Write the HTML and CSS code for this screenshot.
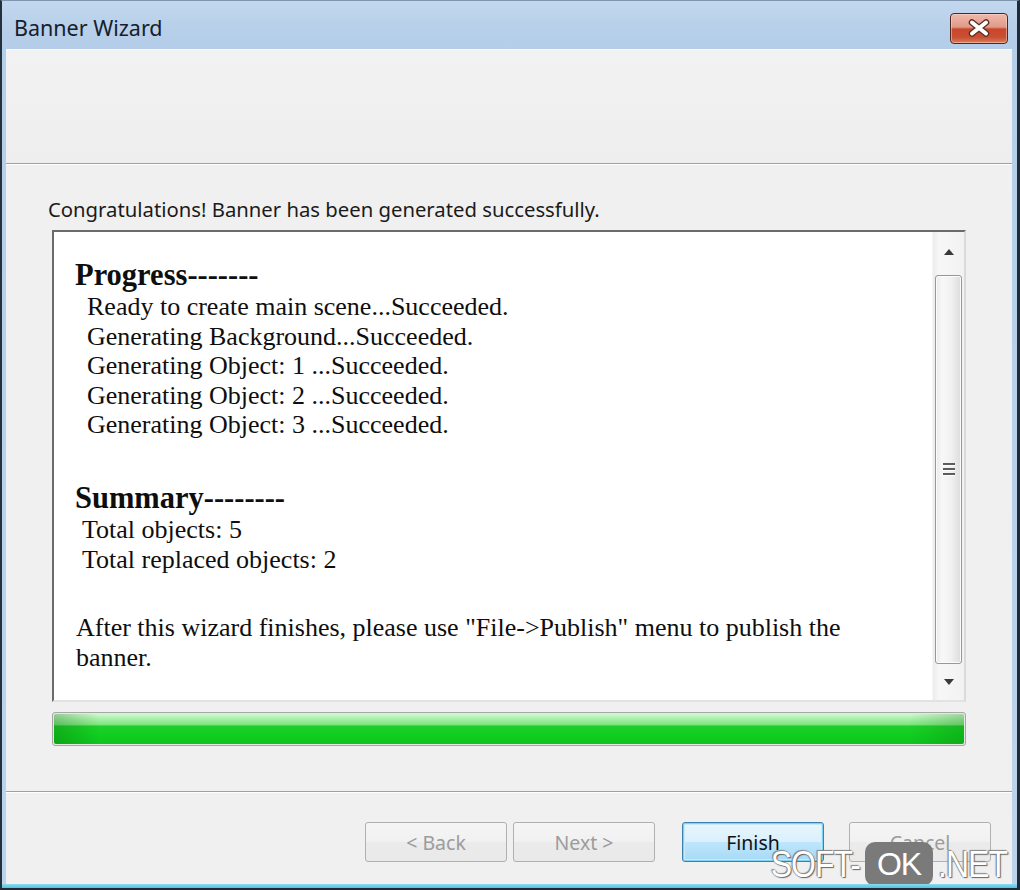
FILE: index.html
```html
<!DOCTYPE html>
<html>
<head>
<meta charset="utf-8">
<title>Banner Wizard</title>
<link rel="stylesheet" href="styles.css">
</head>
<body>
<div class="window">
  <div class="titlebar">
    <span class="title">Banner Wizard</span>
    <div class="close">
      <svg width="26" height="18" viewBox="0 0 26 18">
        <path d="M6 3.5 L20 14.5 M20 3.5 L6 14.5" stroke="#5a2a24" stroke-width="6.5" stroke-linecap="round"/>
        <path d="M6 3.5 L20 14.5 M20 3.5 L6 14.5" stroke="#ffffff" stroke-width="4" stroke-linecap="round"/>
      </svg>
    </div>
  </div>
  <div class="client">
    <div class="header"></div>
    <div class="body">
      <p class="msg">Congratulations! Banner has been generated successfully.</p>
      <div class="log">
        <div class="log-text">
          <div class="h">Progress-------</div>
          <div class="item p">Ready to create main scene...Succeeded.</div>
          <div class="item p">Generating Background...Succeeded.</div>
          <div class="item p">Generating Object: 1 ...Succeeded.</div>
          <div class="item p">Generating Object: 2 ...Succeeded.</div>
          <div class="item p">Generating Object: 3 ...Succeeded.</div>
          <div class="h sum">Summary--------</div>
          <div class="item s">Total objects: 5</div>
          <div class="item s">Total replaced objects: 2</div>
          <div class="item after">After this wizard finishes, please use "File-&gt;Publish" menu to publish the<br>banner.</div>
        </div>
        <div class="scrollbar">
          <div class="sb-btn up"><span class="arrow-up"></span></div>
          <div class="thumb">
            <div class="grip"><span></span><span></span><span></span></div>
          </div>
          <div class="sb-btn down"><span class="arrow-down"></span></div>
        </div>
      </div>
      <div class="progress"><div class="fill"></div></div>
    </div>
    <div class="footer">
      <button class="btn disabled back">&lt; Back</button>
      <button class="btn disabled next">Next &gt;</button>
      <button class="btn primary finish">Finish</button>
      <button class="btn disabled cancel">Cancel</button>
    </div>
  </div>
  <div class="watermark"><span class="wm-t">SOFT-</span><span class="ok">OK</span><span class="wm-t">.NET</span></div>
</div>
</body>
</html>
```

FILE: styles.css
```css
html, body {
  margin: 0;
  padding: 0;
  background: #ffffff;
}

.window {
  position: relative;
  width: 1020px;
  height: 890px;
  box-sizing: border-box;
  border-top: 1px solid #7d96ad;
  border-left: 2px solid #24313d;
  border-right: 3px solid #1f2b36;
  border-bottom: 2px solid #1c2a34;
  background: linear-gradient(180deg, #c0d6ee 0%, #b6cfe9 5%, #bcd3eb 100%);
  display: flex;
  flex-direction: column;
  padding: 0 5px 4px 4px;
  font-family: "Noto Sans", "Open Sans", sans-serif;
}

.window::after {
  content: "";
  position: absolute;
  left: 0;
  right: 0;
  bottom: 0;
  height: 4px;
  background: linear-gradient(180deg, #8fd9ee, #4ec3e3);
}

.titlebar {
  height: 48px;
  flex: none;
  display: flex;
  align-items: center;
  justify-content: space-between;
  margin: 0 -5px 0 -4px;
  padding: 0 9px 0 12px;
  background: linear-gradient(180deg, #c3d8ef 0%, #b8d0ea 50%, #b4cde8 100%);
}

.title {
  font-size: 21.5px;
  color: #15202c;
  margin-top: 4px;
}

.close {
  width: 58px;
  height: 31px;
  box-sizing: border-box;
  margin-top: 6px;
  border: 1px solid #4e2622;
  border-radius: 4px;
  background: linear-gradient(180deg, #efb9ac 0%, #e19a88 45%, #c9472c 52%, #c94f33 80%, #dc7c5c 100%);
  box-shadow: inset 0 0 0 1px rgba(255, 220, 210, 0.5);
  display: flex;
  align-items: center;
  justify-content: center;
}

.client {
  flex: 1;
  display: flex;
  flex-direction: column;
  background: #f0f0f0;
  border-top: 1px solid #f8f8f8;
}

.header {
  height: 113px;
  flex: none;
  background: linear-gradient(180deg, #f2f2f2, #eeeeee);
  border-bottom: 1px solid #a0a0a0;
  box-shadow: 0 1px 0 #ffffff;
}

.body {
  display: flex;
  flex-direction: column;
  padding-top: 32px;
}

.msg {
  margin: 0 0 8px 42px;
  font-size: 20.3px;
  line-height: 26px;
  color: #1b1b1b;
}

.log {
  margin: 0 46px;
  height: 472px;
  box-sizing: border-box;
  border-top: 2px solid #6b6b6b;
  border-left: 2px solid #6b6b6b;
  border-right: 2px solid #dadada;
  border-bottom: 2px solid #e2e2e2;
  background: #ffffff;
  display: flex;
}

.log-text {
  flex: 1;
  padding: 25px 0 0 21px;
  font-family: "Liberation Serif", "Times New Roman", serif;
  color: #0e0e0e;
  font-size: 26px;
}

.h {
  font-weight: bold;
  font-size: 30.5px;
  line-height: 34px;
  margin-top: 1px;
}

.h.sum {
  margin-top: 41px;
}

.item {
  line-height: 29.6px;
  white-space: nowrap;
}

.item.p { padding-left: 12px; }
.item.s { padding-left: 7px; }
.item.after {
  padding-left: 1px;
  margin-top: 39px;
}

.scrollbar {
  width: 31px;
  flex: none;
  display: flex;
  flex-direction: column;
  background: linear-gradient(90deg, #ececec 0%, #f7f7f7 20%, #f2f2f2 100%);
  border-left: 1px solid #f6f6f6;
}

.sb-btn {
  flex: none;
  display: flex;
  align-items: center;
  justify-content: center;
}

.sb-btn.up { height: 40px; }
.sb-btn.down { height: 36px; }

.arrow-up {
  width: 0;
  height: 0;
  border-left: 5px solid transparent;
  border-right: 5px solid transparent;
  border-bottom: 6px solid #3a3a3a;
}

.arrow-down {
  width: 0;
  height: 0;
  border-left: 5px solid transparent;
  border-right: 5px solid transparent;
  border-top: 6px solid #3a3a3a;
}

.thumb {
  flex: 1;
  margin: 3px 2px 0 2px;
  box-sizing: border-box;
  border: 1px solid #979797;
  border-radius: 3px;
  background: linear-gradient(90deg, #e9e9e9 0%, #f8f8f8 25%, #f1f1f1 60%, #dcdcdc 100%);
  box-shadow: inset 0 0 0 1px #fbfbfb;
  display: flex;
  align-items: center;
  justify-content: center;
}

.grip {
  display: flex;
  flex-direction: column;
  gap: 2px;
}

.grip span {
  display: block;
  width: 12px;
  height: 2px;
  background: #5c5c5c;
  border-bottom: 1px solid #ffffff;
}

.progress {
  margin: 10px 46px 0;
  height: 34px;
  box-sizing: border-box;
  border: 1px solid #a7a7a7;
  border-radius: 3px;
  background: #e6e6e6;
  padding: 1px;
}

.fill {
  height: 100%;
  border-radius: 2px;
  background:
    linear-gradient(90deg, rgba(0, 90, 0, 0.28) 0%, rgba(0, 90, 0, 0) 5%, rgba(0, 90, 0, 0) 94%, rgba(0, 90, 0, 0.22) 100%),
    linear-gradient(180deg, #d2f8d2 0%, #a4efa4 18%, #7ce57c 36%, #1fce2a 40%, #0fcf1f 70%, #12c21f 100%);
}

.footer {
  margin-top: auto;
  height: 93px;
  box-sizing: border-box;
  flex: none;
  border-top: 1px solid #a0a0a0;
  box-shadow: inset 0 1px 0 #ffffff;
  padding: 30px 21px 0 0;
  display: flex;
  justify-content: flex-end;
  align-items: flex-start;
}

.btn {
  width: 142px;
  height: 40px;
  box-sizing: border-box;
  border: 1px solid #b0b0b0;
  border-radius: 3px;
  background: linear-gradient(180deg, #f5f5f5 0%, #f1f1f1 50%, #ebebeb 51%, #e9e9e9 100%);
  font-family: "Noto Sans", "Open Sans", sans-serif;
  font-size: 19.5px;
  color: #9c9c9c;
  padding: 0;
}

.btn.next { margin-left: 6px; }
.btn.finish { margin-left: 27px; }
.btn.cancel { margin-left: 25px; }

.btn.primary {
  border: 1px solid #3c7fb1;
  background: linear-gradient(180deg, #eaf6fd 0%, #d9f0fc 50%, #bee6fd 51%, #a7d9f5 100%);
  box-shadow: inset 0 0 0 1px #7ed3f4, inset 0 0 0 2px #c8ecfa;
  color: #111111;
}

.watermark {
  position: absolute;
  right: 10px;
  bottom: 2px;
  display: flex;
  align-items: center;
  font-family: "Liberation Sans", Arial, sans-serif;
  font-size: 32px;
  letter-spacing: -1px;
  color: #ffffff;
  line-height: 44px;
}

.wm-t {
  display: inline-block;
  transform: scaleY(1.15);
  text-shadow: 0 0 1px #555555, 1px 1px 1px #666666, -1px -1px 1px #888888;
}

.ok {
  margin: 0 5px;
  padding: 0 12px;
  height: 44px;
  border-radius: 10px;
  background: #7a7a7a;
  color: #ffffff;
  display: inline-block;
}
```
